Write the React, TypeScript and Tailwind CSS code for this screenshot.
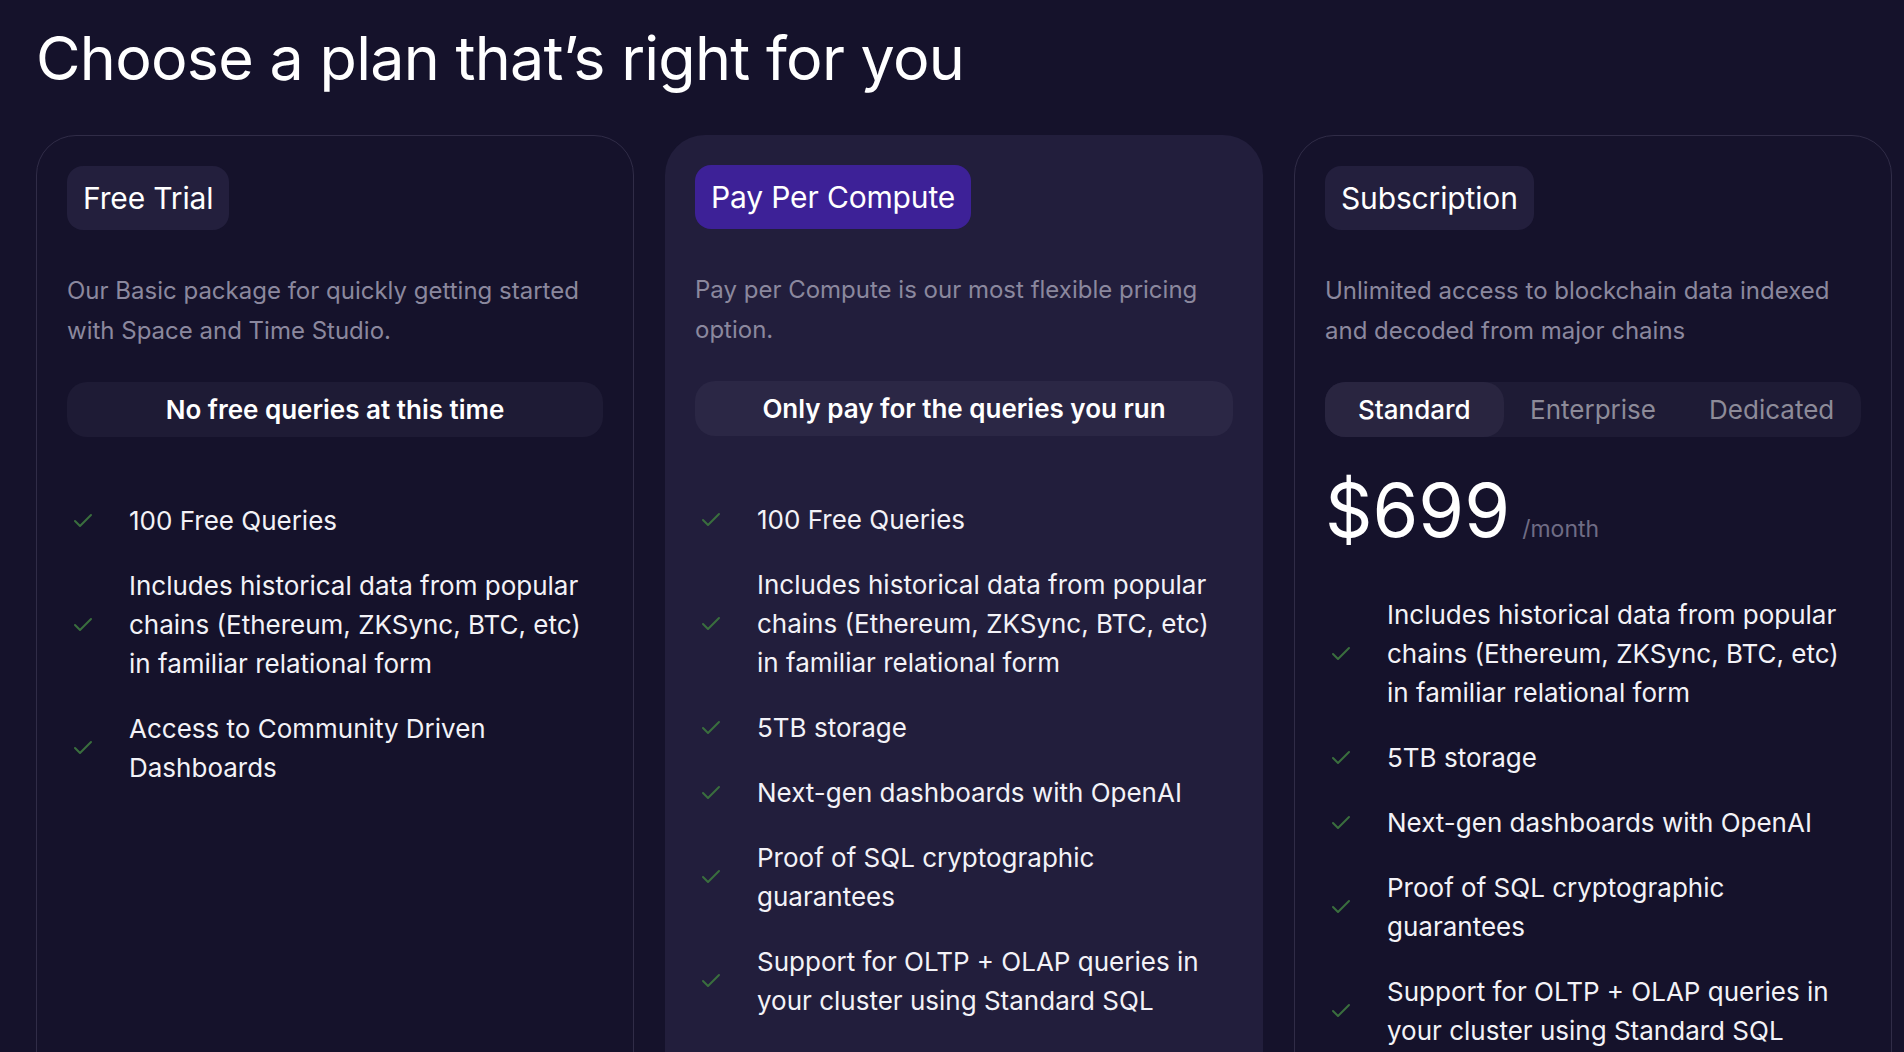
import { Check } from "lucide-react";

type Plan = {
  name: string;
  highlight?: boolean;
  description: string;
  note?: string;
  features: string[];
};

const HISTORICAL =
  "Includes historical data from popular chains (Ethereum, ZKSync, BTC, etc) in familiar relational form";

const PLANS: Plan[] = [
  {
    name: "Free Trial",
    description:
      "Our Basic package for quickly getting started with Space and Time Studio.",
    note: "No free queries at this time",
    features: [
      "100 Free Queries",
      HISTORICAL,
      "Access to Community Driven Dashboards",
    ],
  },
  {
    name: "Pay Per Compute",
    highlight: true,
    description: "Pay per Compute is our most flexible pricing option.",
    note: "Only pay for the queries you run",
    features: [
      "100 Free Queries",
      HISTORICAL,
      "5TB storage",
      "Next-gen dashboards with OpenAI",
      "Proof of SQL cryptographic guarantees",
      "Support for OLTP + OLAP queries in your cluster using Standard SQL",
    ],
  },
  {
    name: "Subscription",
    description:
      "Unlimited access to blockchain data indexed and decoded from major chains",
    features: [
      HISTORICAL,
      "5TB storage",
      "Next-gen dashboards with OpenAI",
      "Proof of SQL cryptographic guarantees",
      "Support for OLTP + OLAP queries in your cluster using Standard SQL",
    ],
  },
];

const TIERS = ["Standard", "Enterprise", "Dedicated"];

function FeatureList({ items, className }: { items: string[]; className: string }) {
  return (
    <ul className={`flex flex-col gap-[26px] ${className}`}>
      {items.map((item) => (
        <li key={item} className="flex items-center">
          <span className="flex w-[62px] shrink-0 pl-1">
            <Check size={24} strokeWidth={2} className="text-[#3a6e3e]" />
          </span>
          <span className="text-[26px] leading-[39px] text-[#f3f2f7]">
            {item}
          </span>
        </li>
      ))}
    </ul>
  );
}

function PlanCard({ plan }: { plan: Plan }) {
  const isSub = !plan.note;
  return (
    <div
      className={
        plan.highlight
          ? "min-h-[1000px] rounded-[40px] bg-[#221e3c] p-[30px]"
          : "min-h-[1000px] rounded-[40px] border border-[#302c47] p-[30px]"
      }
    >
      <div
        className={`inline-flex h-[64px] items-center rounded-2xl px-4 text-[30px] tracking-[-0.005em] text-white ${
          plan.highlight ? "bg-[#3d2197]" : "bg-[#231f3d]"
        }`}
      >
        {plan.name}
      </div>
      <p className="mt-[41px] text-[24px] leading-[40px] text-[#8b889e]">
        {plan.description}
      </p>

      {plan.note ? (
        <div
          className={`mt-[31px] flex h-[55px] items-center justify-center rounded-[20px] text-[26px] font-semibold text-white ${
            plan.highlight ? "bg-[#2b2745]" : "bg-[#1e1b35]"
          }`}
        >
          {plan.note}
        </div>
      ) : (
        <div className="mt-[31px] grid h-[55px] grid-cols-3 rounded-[20px] bg-[#1e1b35]">
          {TIERS.map((tier, i) => (
            <button
              key={tier}
              type="button"
              className={
                i === 0
                  ? "rounded-[20px] bg-[#292540] text-[26px] font-medium text-white"
                  : "text-[26px] text-[#8d8b99]"
              }
            >
              {tier}
            </button>
          ))}
        </div>
      )}

      {isSub && (
        <div className="mt-[36px] flex items-baseline gap-3">
          <span className="text-[74px] leading-none text-white">$699</span>
          <span className="text-[23px] text-[#6f6c85]">/month</span>
        </div>
      )}

      <FeatureList
        items={plan.features}
        className={isSub ? "mt-[48px]" : "mt-[64px]"}
      />
    </div>
  );
}

export default function App() {
  return (
    <div
      className="h-[1052px] overflow-hidden bg-[#15122b] pl-[36px] pr-[12px] pt-[28px]"
      style={{ fontFamily: "Inter, 'Noto Sans', sans-serif" }}
    >
      <h1 className="text-[61px] leading-none tracking-[-0.012em] text-white">
        Choose a plan that&rsquo;s right for you
      </h1>
      <div className="mt-[46px] grid grid-cols-3 gap-[31px]">
        {PLANS.map((plan) => (
          <PlanCard key={plan.name} plan={plan} />
        ))}
      </div>
    </div>
  );
}
